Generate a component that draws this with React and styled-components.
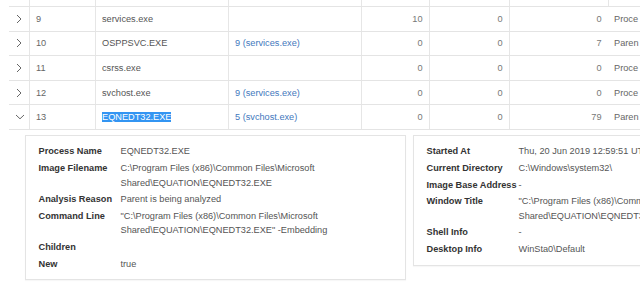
import React from "react";
import styled, { createGlobalStyle } from "styled-components";

const GlobalStyle = createGlobalStyle`
  html, body { margin: 0; padding: 0; background: #fff; }
  body { font-family: "Liberation Sans", Arial, sans-serif; }
`;

const Page = styled.div`
  width: 640px;
  height: 284px;
  overflow: hidden;
  background: #fff;
`;

const Table = styled.div`
  width: 799px;
  margin: -17.6px 0 0 9px;
  font-size: 9.2px;
`;

const Row = styled.div`
  display: grid;
  grid-template-columns: 20px 66px 133px 133px 68px 80px 99px 200px;
  height: 24.6px;
  box-sizing: border-box;
  border-bottom: 1px solid #e4e4e4;
`;

const Cell = styled.div`
  display: flex;
  align-items: center;
  justify-content: ${(p) => (p.$num ? "flex-end" : "flex-start")};
  padding: 0 ${(p) => (p.$num ? "6.5px" : "6px")} 0 6px;
  border-left: ${(p) => (p.$noBorder ? "none" : "1px solid #e6e6e6")};
  color: ${(p) => p.$color || "#555"};
  white-space: nowrap;
  overflow: hidden;
`;

const ExpandCell = styled.div`
  display: flex;
  align-items: center;
  justify-content: center;
  padding-left: ${(p) => (p.$open ? "2px" : "0")};
`;

const Link = styled.span`
  color: #4378bd;
`;

const Selected = styled.span`
  background: #3395f2;
  color: #fff;
`;

const Details = styled.div`
  display: flex;
  align-items: flex-start;
  gap: 7px;
  margin: 5.5px 0 0 24.5px;
  width: 780px;
`;

const Card = styled.div`
  width: ${(p) => p.$width}px;
  flex: none;
  box-sizing: border-box;
  border: 1px solid #e4e4e4;
  box-shadow: 0 1px 1px rgba(0, 0, 0, 0.03);
  background: #fff;
  padding: 7px 13px 7px 13px;
  display: grid;
  grid-template-columns: ${(p) => p.$label}px 1fr;
  font-size: 9.2px;
  line-height: 14.6px;
`;

const Label = styled.div`
  padding: 1px 0;
  font-weight: bold;
  color: #333;
  white-space: nowrap;
`;

const Value = styled.div`
  padding: 1px 0;
  color: #555;
  white-space: ${(p) => (p.$nowrap ? "nowrap" : "normal")};
`;

const Chevron = ({ open }) =>
  open ? (
    <svg width="10" height="6" viewBox="0 0 10 6">
      <polyline points="1,1 5,4.8 9,1" fill="none" stroke="#555" strokeWidth="0.9" />
    </svg>
  ) : (
    <svg width="6" height="10" viewBox="0 0 6 10">
      <polyline points="1,1 5,5 1,9" fill="none" stroke="#555" strokeWidth="0.9" />
    </svg>
  );

const rows = [
  { id: "8", name: "", parent: "", a: "", b: "", c: "", reason: "", lastBorder: true },
  { id: "9", name: "services.exe", parent: "", a: "10", b: "0", c: "0", reason: "Proce" },
  { id: "10", name: "OSPPSVC.EXE", parent: "9 (services.exe)", a: "0", b: "0", c: "7", reason: "Paren" },
  { id: "11", name: "csrss.exe", parent: "", a: "0", b: "0", c: "0", reason: "Proce" },
  { id: "12", name: "svchost.exe", parent: "9 (services.exe)", a: "0", b: "0", c: "0", reason: "Proce" },
  { id: "13", name: "EQNEDT32.EXE", parent: "5 (svchost.exe)", a: "0", b: "0", c: "79", reason: "Paren", open: true, selected: true },
];

const leftDetails = [
  ["Process Name", "EQNEDT32.EXE"],
  ["Image Filename", "C:\\Program Files (x86)\\Common Files\\Microsoft Shared\\EQUATION\\EQNEDT32.EXE"],
  ["Analysis Reason", "Parent is being analyzed"],
  ["Command Line", "\"C:\\Program Files (x86)\\Common Files\\Microsoft Shared\\EQUATION\\EQNEDT32.EXE\" -Embedding"],
  ["Children", ""],
  ["New", "true"],
];

const rightDetails = [
  ["Started At", "Thu, 20 Jun 2019 12:59:51 UTC"],
  ["Current Directory", "C:\\Windows\\system32\\"],
  ["Image Base Address", "-"],
  ["Window Title", "\"C:\\Program Files (x86)\\Common Files\\Microsoft Shared\\EQUATION\\EQNEDT32.EXE\""],
  ["Shell Info", "-"],
  ["Desktop Info", "WinSta0\\Default"],
];

export default function App() {
  return (
    <Page>
      <GlobalStyle />
      <Table>
        {rows.map((r) => (
          <Row key={r.id}>
            <ExpandCell $open={r.open}>
              <Chevron open={r.open} />
            </ExpandCell>
            <Cell $color="#666">{r.id === "8" ? "" : r.id}</Cell>
            <Cell>{r.selected ? <Selected>{r.name}</Selected> : r.name}</Cell>
            <Cell>
              <Link>{r.parent}</Link>
            </Cell>
            <Cell $num $color="#777">{r.a}</Cell>
            <Cell $num $color="#777">{r.b}</Cell>
            <Cell $num $color="#777">{r.c}</Cell>
            <Cell $noBorder={!r.lastBorder} $color="#666">
              {r.reason}
            </Cell>
          </Row>
        ))}
      </Table>
      <Details>
        <Card $width={381} $label={82}>
          {leftDetails.map(([k, v]) => (
            <React.Fragment key={k}>
              <Label>{k}</Label>
              <Value>{v || "\u00a0"}</Value>
            </React.Fragment>
          ))}
        </Card>
        <Card $width={390} $label={92}>
          {rightDetails.map(([k, v]) => (
            <React.Fragment key={k}>
              <Label>{k}</Label>
              <Value $nowrap={k === "Started At"}>{v}</Value>
            </React.Fragment>
          ))}
        </Card>
      </Details>
    </Page>
  );
}
